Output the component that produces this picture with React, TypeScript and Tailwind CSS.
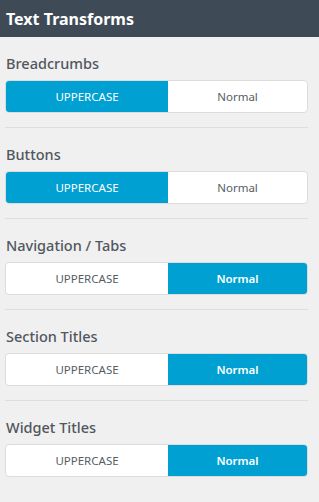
const sections = [
  { label: "Breadcrumbs", value: "upper" },
  { label: "Buttons", value: "upper" },
  { label: "Navigation / Tabs", value: "normal" },
  { label: "Section Titles", value: "normal" },
  { label: "Widget Titles", value: "normal" },
];

function Toggle({ value }: { value: string }) {
  const upper = value === "upper";
  return (
    <div className="flex h-[33px] overflow-hidden rounded-[4px] border border-[#dcdcdc] bg-white text-[11.5px]">
      <div
        className={
          upper
            ? "flex w-[162px] items-center justify-center bg-[#00a0d2] text-white"
            : "flex w-[162px] items-center justify-center text-[#555d66]"
        }
      >
        UPPERCASE
      </div>
      <div
        className={
          upper
            ? "flex flex-1 items-center justify-center text-[#555d66]"
            : "flex flex-1 items-center justify-center bg-[#00a0d2] font-semibold text-white"
        }
      >
        Normal
      </div>
    </div>
  );
}

export default function App() {
  return (
    <main
      className="min-h-screen w-[319px] bg-[#f0f0f0]"
      style={{ fontFamily: '"Noto Sans", "Open Sans", sans-serif' }}
    >
      <div className="flex h-[37px] items-center bg-[#3e4a56] px-[6px] text-[16px] font-bold text-white">
        Text Transforms
      </div>

      <div className="pl-[5px] pr-[11px]">
        {sections.map((s, i) => (
          <div
            key={s.label}
            className={i < sections.length - 1 ? "border-b border-[#dddddd] pb-[14px] pt-[16px]" : "pt-[16px]"}
          >
            <div className="px-[1px] text-[14.5px] leading-[20px] font-medium text-[#50575e]">{s.label}</div>
            <div className="mt-[7px]">
              <Toggle value={s.value} />
            </div>
          </div>
        ))}
      </div>
    </main>
  );
}
